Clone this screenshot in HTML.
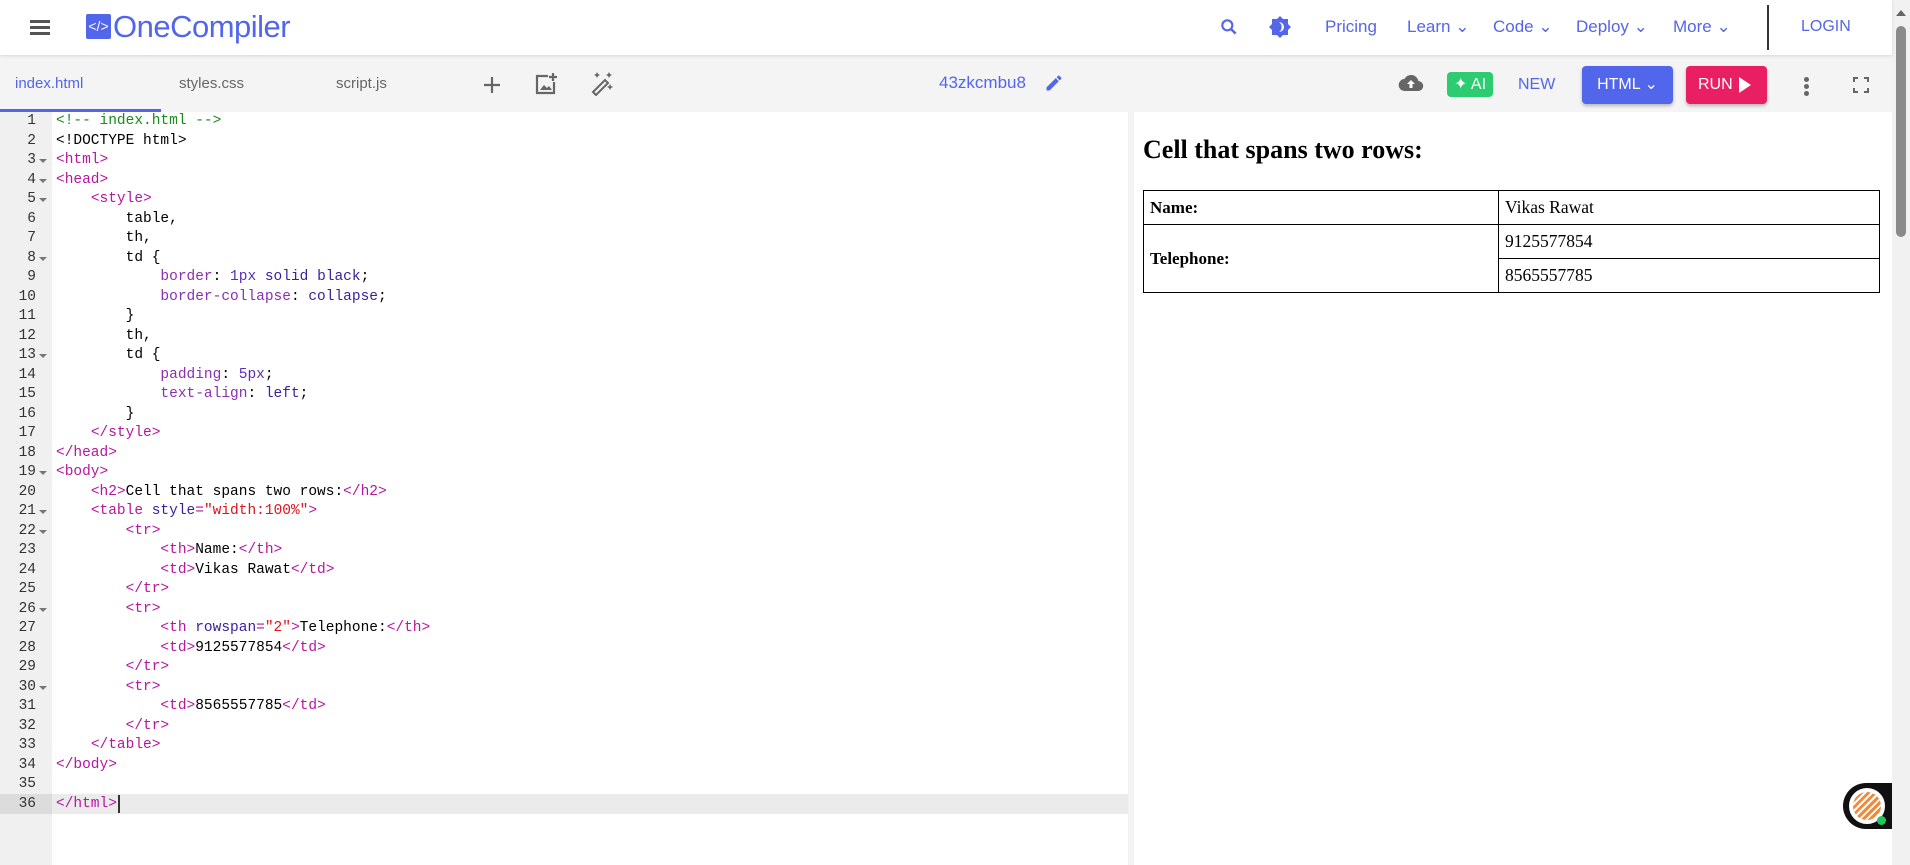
<!DOCTYPE html>
<html><head><meta charset="utf-8">
<style>
*{margin:0;padding:0;box-sizing:border-box}
body{width:1910px;height:865px;overflow:hidden;background:#fff;font-family:"Liberation Sans",sans-serif;position:relative}
.abs{position:absolute}
#hdr{left:0;top:0;width:1892px;height:55px;background:#fff;box-shadow:0 1px 3px rgba(0,0,0,.12);z-index:2}
.nav{position:absolute;top:17px;font-size:17px;color:#5566e6}
#tabs{left:0;top:55px;width:1892px;height:57px;background:#f4f4f4}
.tab{position:absolute;top:20px;font-size:15px;color:#666}
#gutter{left:0;top:112px;width:52px;height:753px;background:#f0f0f0}
#code{left:0;top:112px;width:1128px;font-family:"Liberation Mono",monospace;font-size:14.5px;line-height:19.5px;white-space:pre}
.ln{position:absolute;left:0;width:36px;text-align:right;color:#333}
.cl{position:absolute;left:56px;color:#000}
.fa{position:absolute;left:39px;width:0;height:0;border-left:4px solid transparent;border-right:4px solid transparent;border-top:4px solid #777;margin-top:8px}
.t{color:#b5179e}.c{color:#1a8a1a}.a{color:#3a1e9e}.s{color:#e0121b}.p{color:#8c2fb0}.v{color:#5c2db8}
#sep{left:1128px;top:112px;width:6px;height:753px;background:#f3f3f3}
#prev{left:1134px;top:112px;width:758px;height:753px;background:#fff;font-family:"Liberation Serif",serif}
table{border-collapse:collapse;position:absolute;left:9px;top:78px;width:737px;font-size:17.5px}
td,th{border:1px solid #000;text-align:left;padding:0 6px;height:34px}
th{font-weight:bold;font-size:17px}
</style></head><body>
<div id="hdr" class="abs">
  <div class="abs" style="left:30px;top:20px;width:20px;height:2.5px;background:#555;box-shadow:0 6px 0 #555,0 12px 0 #555"></div>
  <div class="abs" style="left:86px;top:14px;width:25px;height:25px;background:#5266ec;border-radius:2px;color:#fff;font-size:14px;line-height:25px;text-align:center;font-family:'Liberation Sans'">&lt;/&gt;</div>
  <div class="abs" style="left:113px;top:10px;font-size:31px;line-height:34px;color:#5266ec;letter-spacing:-0.5px">OneCompiler</div>
  <svg class="abs" style="left:1219px;top:17px" width="20" height="20" viewBox="0 0 24 24"><circle cx="10" cy="10" r="6" fill="none" stroke="#5566e6" stroke-width="2.6"/><path d="M14.5 14.5L20 20" stroke="#5566e6" stroke-width="3"/></svg>
  <svg class="abs" style="left:1268px;top:15px" width="24" height="24" viewBox="0 0 24 24"><path d="M12 1l3 3h5v5l3 3-3 3v5h-5l-3 3-3-3H4v-5l-3-3 3-3V4h5z" fill="#5566e6"/><path d="M11 7a5 5 0 0 1 0 10a6 6 0 0 0 0-10z" fill="#fff"/></svg>
  <div class="nav" style="left:1325px">Pricing</div>
  <div class="nav" style="left:1407px">Learn ⌄</div>
  <div class="nav" style="left:1493px">Code ⌄</div>
  <div class="nav" style="left:1576px">Deploy ⌄</div>
  <div class="nav" style="left:1673px">More ⌄</div>
  <div class="abs" style="left:1767px;top:5px;width:2px;height:45px;background:#333"></div>
  <div class="nav" style="left:1801px;font-size:16px;top:18px">LOGIN</div>
</div>
<div id="tabs" class="abs">
  <div class="tab" style="left:15px;color:#5266ec">index.html</div>
  <div class="abs" style="left:0;top:54px;width:161px;height:3px;background:#5266ec"></div>
  <div class="tab" style="left:179px">styles.css</div>
  <div class="tab" style="left:336px">script.js</div>
  <svg class="abs" style="left:482px;top:20px" width="20" height="20" viewBox="0 0 20 20"><path d="M10 2v16M2 10h16" stroke="#666" stroke-width="2.2"/></svg>
  <svg class="abs" style="left:533px;top:16px" width="26" height="26" viewBox="0 0 26 26"><path d="M15 5H4v17h17V11" fill="none" stroke="#666" stroke-width="2.2"/><path d="M20 2v8M16 6h8" stroke="#666" stroke-width="2.2"/><path d="M7 19l4-5 3 3 2-2 3 4z" fill="#666"/></svg>
  <svg class="abs" style="left:589px;top:15px" width="26" height="26" viewBox="0 0 26 26"><path d="M4 22l12-12 3 3-12 12z" fill="none" stroke="#666" stroke-width="2"/><path d="M8 2l1 2 2 1-2 1-1 2-1-2-2-1 2-1zM20 2l1 2 2 1-2 1-1 2-1-2-2-1 2-1zM21 14l1 2 2 1-2 1-1 2-1-2-2-1 2-1z" fill="#666"/></svg>
  <div class="abs" style="left:939px;top:18px;font-size:17px;color:#5266ec">43zkcmbu8</div>
  <svg class="abs" style="left:1044px;top:18px" width="20" height="20" viewBox="0 0 24 24"><path d="M3 17.3V21h3.7L17.8 9.9l-3.7-3.7zM20.7 7a1 1 0 0 0 0-1.4l-2.3-2.3a1 1 0 0 0-1.4 0l-1.8 1.8 3.7 3.7z" fill="#5266ec"/></svg>
  <svg class="abs" style="left:1397px;top:16px" width="28" height="24" viewBox="0 0 24 24"><path d="M19.4 10A7.5 7.5 0 0 0 5.4 8 6 6 0 0 0 6 20h13a5 5 0 0 0 .4-10z" fill="#666"/><path d="M12 9l-4 4h2.5v4h3v-4H16z" fill="#fff"/></svg>
  <div class="abs" style="left:1447px;top:17px;width:46px;height:25px;background:#2ecc71;border-radius:4px;color:#fff;font-size:16px;line-height:25px;text-align:center">✦ AI</div>
  <div class="abs" style="left:1518px;top:21px;font-size:16px;color:#5266ec">NEW</div>
  <div class="abs" style="left:1582px;top:11px;width:91px;height:38px;background:#5266ec;border-radius:4px;color:#fff;font-size:16px;line-height:38px;text-align:center;box-shadow:0 2px 3px rgba(0,0,0,.25)">HTML ⌄</div>
  <div class="abs" style="left:1686px;top:11px;width:81px;height:38px;background:#e91e63;border-radius:4px;color:#fff;font-size:16px;line-height:38px;padding-left:12px;box-shadow:0 2px 3px rgba(0,0,0,.25)">RUN</div>
  <div class="abs" style="left:1739px;top:22px;width:0;height:0;border-top:8px solid transparent;border-bottom:8px solid transparent;border-left:12px solid #fff"></div>
  <div class="abs" style="left:1804px;top:22px;width:5px;height:5px;border-radius:50%;background:#666;box-shadow:0 7px 0 #666,0 14px 0 #666"></div>
  <svg class="abs" style="left:1853px;top:22px" width="16" height="16" viewBox="0 0 16 16"><path d="M1 5V1h4M11 1h4v4M15 11v4h-4M5 15H1v-4" fill="none" stroke="#666" stroke-width="2"/></svg>
</div>
<div id="gutter" class="abs"></div>
<div class="abs" style="left:0;top:794px;width:1128px;height:19.5px;background:#ebebeb"></div>
<div class="abs" style="left:0;top:794px;width:52px;height:19.5px;background:#dcdcdc"></div>
<div id="code" class="abs">
<div class="ln" style="top:0">1</div><div class="cl" style="top:0"><span class="c">&lt;!-- index.html --&gt;</span></div>
<div class="ln" style="top:19.5px">2</div><div class="cl" style="top:19.5px">&lt;!DOCTYPE html&gt;</div>
<div class="ln" style="top:39px">3</div><div class="fa" style="top:39px"></div><div class="cl" style="top:39px"><span class="t">&lt;html&gt;</span></div>
<div class="ln" style="top:58.5px">4</div><div class="fa" style="top:58.5px"></div><div class="cl" style="top:58.5px"><span class="t">&lt;head&gt;</span></div>
<div class="ln" style="top:78px">5</div><div class="fa" style="top:78px"></div><div class="cl" style="top:78px">    <span class="t">&lt;style&gt;</span></div>
<div class="ln" style="top:97.5px">6</div><div class="cl" style="top:97.5px">        table,</div>
<div class="ln" style="top:117px">7</div><div class="cl" style="top:117px">        th,</div>
<div class="ln" style="top:136.5px">8</div><div class="fa" style="top:136.5px"></div><div class="cl" style="top:136.5px">        td {</div>
<div class="ln" style="top:156px">9</div><div class="cl" style="top:156px">            <span class="p">border</span>: <span class="v">1px</span> <span class="a">solid black</span>;</div>
<div class="ln" style="top:175.5px">10</div><div class="cl" style="top:175.5px">            <span class="p">border-collapse</span>: <span class="a">collapse</span>;</div>
<div class="ln" style="top:195px">11</div><div class="cl" style="top:195px">        }</div>
<div class="ln" style="top:214.5px">12</div><div class="cl" style="top:214.5px">        th,</div>
<div class="ln" style="top:234px">13</div><div class="fa" style="top:234px"></div><div class="cl" style="top:234px">        td {</div>
<div class="ln" style="top:253.5px">14</div><div class="cl" style="top:253.5px">            <span class="p">padding</span>: <span class="v">5px</span>;</div>
<div class="ln" style="top:273px">15</div><div class="cl" style="top:273px">            <span class="p">text-align</span>: <span class="a">left</span>;</div>
<div class="ln" style="top:292.5px">16</div><div class="cl" style="top:292.5px">        }</div>
<div class="ln" style="top:312px">17</div><div class="cl" style="top:312px">    <span class="t">&lt;/style&gt;</span></div>
<div class="ln" style="top:331.5px">18</div><div class="cl" style="top:331.5px"><span class="t">&lt;/head&gt;</span></div>
<div class="ln" style="top:351px">19</div><div class="fa" style="top:351px"></div><div class="cl" style="top:351px"><span class="t">&lt;body&gt;</span></div>
<div class="ln" style="top:370.5px">20</div><div class="cl" style="top:370.5px">    <span class="t">&lt;h2&gt;</span>Cell that spans two rows:<span class="t">&lt;/h2&gt;</span></div>
<div class="ln" style="top:390px">21</div><div class="fa" style="top:390px"></div><div class="cl" style="top:390px">    <span class="t">&lt;table</span> <span class="a">style</span><span class="t">=</span><span class="s">"width:100%"</span><span class="t">&gt;</span></div>
<div class="ln" style="top:409.5px">22</div><div class="fa" style="top:409.5px"></div><div class="cl" style="top:409.5px">        <span class="t">&lt;tr&gt;</span></div>
<div class="ln" style="top:429px">23</div><div class="cl" style="top:429px">            <span class="t">&lt;th&gt;</span>Name:<span class="t">&lt;/th&gt;</span></div>
<div class="ln" style="top:448.5px">24</div><div class="cl" style="top:448.5px">            <span class="t">&lt;td&gt;</span>Vikas Rawat<span class="t">&lt;/td&gt;</span></div>
<div class="ln" style="top:468px">25</div><div class="cl" style="top:468px">        <span class="t">&lt;/tr&gt;</span></div>
<div class="ln" style="top:487.5px">26</div><div class="fa" style="top:487.5px"></div><div class="cl" style="top:487.5px">        <span class="t">&lt;tr&gt;</span></div>
<div class="ln" style="top:507px">27</div><div class="cl" style="top:507px">            <span class="t">&lt;th</span> <span class="a">rowspan</span><span class="t">=</span><span class="s">"2"</span><span class="t">&gt;</span>Telephone:<span class="t">&lt;/th&gt;</span></div>
<div class="ln" style="top:526.5px">28</div><div class="cl" style="top:526.5px">            <span class="t">&lt;td&gt;</span>9125577854<span class="t">&lt;/td&gt;</span></div>
<div class="ln" style="top:546px">29</div><div class="cl" style="top:546px">        <span class="t">&lt;/tr&gt;</span></div>
<div class="ln" style="top:565.5px">30</div><div class="fa" style="top:565.5px"></div><div class="cl" style="top:565.5px">        <span class="t">&lt;tr&gt;</span></div>
<div class="ln" style="top:585px">31</div><div class="cl" style="top:585px">            <span class="t">&lt;td&gt;</span>8565557785<span class="t">&lt;/td&gt;</span></div>
<div class="ln" style="top:604.5px">32</div><div class="cl" style="top:604.5px">        <span class="t">&lt;/tr&gt;</span></div>
<div class="ln" style="top:624px">33</div><div class="cl" style="top:624px">    <span class="t">&lt;/table&gt;</span></div>
<div class="ln" style="top:643.5px">34</div><div class="cl" style="top:643.5px"><span class="t">&lt;/body&gt;</span></div>
<div class="ln" style="top:663px">35</div>
<div class="ln" style="top:682.5px">36</div><div class="cl" style="top:682.5px"><span class="t">&lt;/html&gt;</span></div>
<div class="abs" style="left:118px;top:683px;width:1.5px;height:18px;background:#333"></div>
</div>
<div id="sep" class="abs"></div>
<div id="prev" class="abs">
  <div class="abs" style="left:9px;top:23px;font-size:26px;font-weight:bold">Cell that spans two rows:</div>
  <table>
    <tr><th style="width:355px">Name:</th><td>Vikas Rawat</td></tr>
    <tr><th rowspan="2">Telephone:</th><td>9125577854</td></tr>
    <tr><td>8565557785</td></tr>
  </table>
</div>
<div class="abs" style="left:1843px;top:783px;width:49px;height:46px;background:#111;border-radius:23px 0 0 23px"></div>
<div class="abs" style="left:1849px;top:788px;width:36px;height:36px;border-radius:50%;background:repeating-linear-gradient(135deg,#f08a3c 0 3px,#fff 3px 5px);border:4px solid #fff"></div>
<div class="abs" style="left:1877px;top:816px;width:9px;height:9px;border-radius:50%;background:#22c55e"></div>
<div class="abs" style="left:1892px;top:0;width:18px;height:865px;background:#f1f1f1"></div>
<div class="abs" style="left:1896px;top:26px;width:10px;height:211px;background:#8a8a8a;border-radius:5px"></div>
<div class="abs" style="left:1896px;top:10px;width:0;height:0;border-left:5px solid transparent;border-right:5px solid transparent;border-bottom:6px solid #666"></div>
</body></html>
